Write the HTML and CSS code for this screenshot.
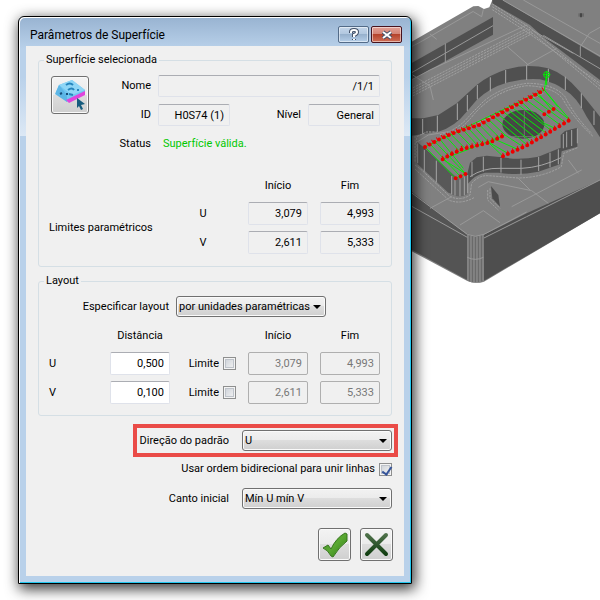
FILE: index.html
```html
<!DOCTYPE html>
<html lang="pt">
<head>
<meta charset="utf-8">
<title>Parâmetros de Superfície</title>
<link rel="stylesheet" href="styles.css">
</head>
<body>
<svg class="scene" viewBox="400 0 200 300" aria-hidden="true">
  <g transform="translate(410 0) scale(.33333)">
    <path fill="#808080" d="M-30 135L5 125L190 19L205 18L222 27L238 22L247 0H570V640L222 845Q198 853 172 843L-30 735Z"/>
    <path fill="#545454" d="M-30 555L5 575L172 705V840L-30 730Z"/>
    <path fill="#4e4e4e" d="M220 705L350 640L570 540V640L222 842Z"/>
    <path fill="#6a6a6a" d="M172 700Q196 716 220 702V842Q198 853 172 842Z"/>
    <path stroke="#999" stroke-width="3" fill="none" d="M174 705V842M183 708V846M192 710V848M201 710V848M210 708V846M219 704V842M172 772Q196 784 220 772"/>
    <path stroke="#9a9a9a" stroke-width="3" fill="none" d="M0 616L172 712M222 714L350 650L570 540M0 575L172 703L196 709L222 703L350 636"/>
    <path fill="#505050" d="M0 192L249 51V104L0 242Z"/>
    <path fill="#505050" d="M247 0H278L570 172V240L400 112L360 75L247 10Z"/>
    <g stroke="#999" stroke-width="3" fill="none">
      <path d="M5 218L249 77M106 130V188M5 140L42 120L190 34M60 102L80 118M190 35L215 50L220 28"/>
      <path d="M278 0L570 168M340 0L570 130M511 170V140L538 100L570 82M400 106L570 206"/>
      <path d="M0 242L60 210L350 75M8 225L60 258L70 300M292 140L355 195M365 90L490 160M440 145L350 195"/>
    </g>
    <g class="mesh" stroke="#a0a0a0" stroke-width="3" fill="none">
      <path d="M247 12L355 80L570 258M247 20L350 86L570 268M247 29L348 94L570 250"/>
      <path d="M0 268L355 83M0 276L360 88M0 284L365 94M0 292L368 100"/>
    </g>
    <path fill="#6a6a6a" d="M505 40h17v10h-17z"/><path stroke="#333" stroke-width="4" d="M513 40v12"/>
    <path fill="#505050" d="M0 355H40L85 345L140 310L200 255Q238 225 290 208Q350 190 415 205Q465 222 510 275L570 350V412L530 350Q500 290 465 270Q435 248 390 238Q350 233 290 248Q240 262 200 300L170 335Q135 380 85 395L0 408Z"/>
    <path stroke="#aaa" stroke-width="3" fill="none" d="M38 357V403M82 347V396M142 310V360M172 285V333M202 255V298M241 232V274M287 210V250M350 196V240M415 206V246M466 230V270M514 280V324M552 332V375"/>
    <g class="mesh" stroke="#a3a3a3" stroke-width="3" fill="none">
      <path d="M90 404Q145 390 180 345L220 305Q270 262 350 250Q430 250 465 290Q495 350 545 400M95 410Q150 397 190 345Q255 270 350 257Q430 260 458 296Q490 355 550 410"/>
      <path d="M20 470V410L50 396H80M15 485V405"/>
    </g>
  </g>
  <g transform="translate(415 60) scale(.33333)">
    <path fill="#585858" d="M5 245L30 265L122 350V405L100 398L5 310Z"/>
    <path fill="#666" d="M108 345Q133 368 158 342V402Q132 417 108 402Z"/>
    <path fill="#505050" d="M156 345L165 308L185 292L215 287L260 292Q315 301 370 290L437 263V225L450 213L487 203V260L440 274L435 313L370 335Q310 348 250 338L210 338Q180 344 158 372Z"/>
    <path stroke="#a5a5a5" stroke-width="3" fill="none" d="M8 250V310M28 270V335M64 302V367M110 348V403M120 355V407M135 358V409M148 350V406M158 345V400M171 305V350M205 290V335M258 294V338M318 299V344M371 291V333M405 278V322M430 268V313M445 222V265M455 215V262M470 210V258M487 205V250M165 350Q205 323 255 325H320Q380 322 438 293"/>
    <g class="mesh" stroke="#a0a0a0" stroke-width="3" fill="none">
      <path d="M0 315L20 330L103 408Q135 425 165 405L170 370Q192 345 220 347L310 354Q385 352 439 320L446 280L490 262M0 327L101 420Q136 435 177 413"/>
      <path d="M225 385V415L255 445M218 390V420L250 450"/>
    </g>
    <path stroke="#999" stroke-width="3" fill="none" d="M45 445L110 410M190 382L220 365L350 392L400 430M290 440L500 330M345 390L310 355M490 340L460 300M135 495L205 452L255 488M0 250L40 225L100 215M140 210L385 100"/>
    <path fill="#4b4b4b" d="M228 378L250 405L255 440L232 415Z"/>
    <ellipse cx="325" cy="193" rx="63" ry="43" fill="#464646"/>
    <path stroke="#888" stroke-width="2" d="M328 152V236M290 230H360"/>
    <path class="toolpath" d="M30 261L122 355M45 252L132 345M60 245L152 341M75 238L145 325M83 298L152 341M30 261L388 90L395 44M388 90L428 140M388 90L465 180M122 355L152 341M83 298L270 225L322 259M90 226L130 270M105 220L150 265M125 214L170 260M145 210L188 257M160 205L205 253M178 201L222 248M192 193L240 242M207 187L255 235M220 178L270 225M236 170L335 254M250 163L350 247M265 155L364 236M280 150L378 228M292 143L393 219M308 134L408 211M322 128L388 190L420 205M337 122L437 196M351 113L452 188M366 105L465 180M218 245L280 281M240 238L308 268M264 289L218 245M372 103L415 155"/>
    <path class="points" d="M30 261L75 237L120 217L190 196L388 90"/>
    <path class="points" d="M83 298L110 282L140 268L225 247L270 225"/>
    <path class="points" d="M264 289L340 254L465 180"/>
    <path class="points" d="M388 163L428 140M122 355L153 341"/>
    <path class="ticks" d="M37 253L75 233L120 213L190 192L388 86M83 294L140 264L225 243L270 221M264 285L340 250L465 176"/>
    <g stroke="#00ec00" stroke-width="3" fill="none"><circle cx="395" cy="44" r="9"/><path d="M384 44H406M395 33V75"/></g>
  </g>
</svg>

<section class="dialog" role="dialog" aria-labelledby="dialog-title">
  <header class="titlebar">
    <h1 id="dialog-title">Parâmetros de Superfície</h1>
    <button class="caption" type="button" aria-label="Ajuda">
      <svg viewBox="0 0 16 14"><path class="glyph-edge" d="M5 5V4Q5 2 8 2Q11 2 11 4Q11 6 8 7V9M8 11V12"/><path class="glyph" d="M5 5V4Q5 2 8 2Q11 2 11 4Q11 6 8 7V9M8 11V12"/></svg>
    </button>
    <button class="caption close" type="button" aria-label="Fechar">
      <svg viewBox="0 0 16 14"><path class="glyph-edge" d="M4 4L12 10M12 4L4 10"/><path class="glyph" d="M4 4L12 10M12 4L4 10"/></svg>
    </button>
  </header>

  <form class="client">
    <fieldset>
      <legend>Superfície selecionada</legend>
      <div class="surface">
        <button class="pick" type="button" aria-label="Selecionar superfície">
          <svg viewBox="0 0 36 36">
            <path fill="#72c7f2" d="M7 8L20 3L33 13V17L15 25L4 15Z"/>
            <path fill="#8fd6f6" d="M7 8L20 3L33 13L20 18Z"/>
            <path fill="#5cb6e6" d="M3 17L7 8L15 18V25Z"/>
            <path fill="#df45dc" d="M14 23L33 14V18L17 26Z"/>
            <path fill="none" stroke="#2585bd" stroke-width="2" d="M14 8Q18 5 21 8M16 13Q20 10 22 13M25 13H27M17 17L21 18"/>
            <path fill="none" stroke="#164f7c" stroke-width="2" d="M8 17L10 16M14 17H16"/>
            <path fill="#155b7d" d="M25 21L33 27L29 28L31 32L29 33L27 29L25 31Z"/>
          </svg>
        </button>
        <label for="nome">Nome</label>
        <input id="nome" class="wide" value="/1/1" readonly>
        <label class="second" for="ident">ID</label>
        <div class="pair">
          <input id="ident" value="H0S74 (1)" readonly>
          <label for="nivel">Nível</label>
          <input id="nivel" value="General" readonly>
        </div>
        <span class="second">Status</span>
        <output class="valid">Superfície válida.</output>
      </div>
      <div class="limits">
        <span class="head start">Início</span>
        <span class="head">Fim</span>
        <span class="caption-cell">Limites paramétricos</span>
        <span class="axis">U</span>
        <input aria-label="U início" value="3,079" readonly>
        <input aria-label="U fim" value="4,993" readonly>
        <span class="axis">V</span>
        <input aria-label="V início" value="2,611" readonly>
        <input aria-label="V fim" value="5,333" readonly>
      </div>
    </fieldset>

    <fieldset class="layout">
      <legend>Layout</legend>
      <div class="choice">
        <label for="tipo">Especificar layout</label>
        <span class="combo"><select id="tipo"><option>por unidades paramétricas</option></select></span>
      </div>
      <div class="spacing">
        <span class="head distance">Distância</span>
        <span class="head start">Início</span>
        <span class="head">Fim</span>
        <label for="du">U</label>
        <input id="du" class="edit" value="0,500">
        <label class="tick">Limite <input type="checkbox"></label>
        <input aria-label="Limite U início" value="3,079" disabled>
        <input aria-label="Limite U fim" value="4,993" disabled>
        <label for="dv">V</label>
        <input id="dv" class="edit" value="0,100">
        <label class="tick">Limite <input type="checkbox"></label>
        <input aria-label="Limite V início" value="2,611" disabled>
        <input aria-label="Limite V fim" value="5,333" disabled>
      </div>
    </fieldset>

    <div class="options">
      <div class="option highlight">
        <label for="direcao">Direção do padrão</label>
        <span class="combo"><select id="direcao"><option>U</option></select></span>
      </div>
      <label class="tick">Usar ordem bidirecional para unir linhas <input type="checkbox" checked></label>
      <div class="option">
        <label for="canto">Canto inicial</label>
        <span class="combo"><select id="canto"><option>Mín U mín V</option></select></span>
      </div>
    </div>

    <footer class="actions">
      <button type="submit" aria-label="OK">
        <svg viewBox="0 0 31 31">
          <defs><linearGradient id="leaf" x1="0" y1="0" x2="1" y2="1"><stop offset="0" stop-color="#3f8d2b"/><stop offset=".5" stop-color="#5aa832"/><stop offset="1" stop-color="#2c7c10"/></linearGradient></defs>
          <path fill="url(#leaf)" stroke="#38771f" d="M4 19L9 16L12 20Q17 9 26 4L28 5V12Q20 18 14 28L12 27Q9 21 4 19Z"/>
        </svg>
      </button>
      <button type="button" aria-label="Cancelar">
        <svg viewBox="0 0 31 31">
          <defs><linearGradient id="cross" x1="0" y1="0" x2="0" y2="1"><stop offset="0" stop-color="#4d7049"/><stop offset="1" stop-color="#123f12"/></linearGradient></defs>
          <path fill="none" stroke="url(#cross)" stroke-width="4" stroke-linecap="round" d="M6 6L25 25M25 6L6 25"/>
        </svg>
      </button>
    </footer>
  </form>
</section>
</body>
</html>
```
FILE: styles.css
```css
* { box-sizing: border-box; }

body {
  position: relative;
  margin: 0;
  padding: 16px 188px 16px 18px;
  background: #fff;
  color: #000;
  font: 11px/16px Roboto, sans-serif;
}

/* 3D model behind the dialog */
.scene { position: absolute; top: 0; right: 0; width: 200px; height: 300px; }
.mesh { stroke-dasharray: 7 3; }
.toolpath { fill: none; stroke: #00f000; stroke-width: 3; }
.points { fill: none; stroke: #ed0000; stroke-width: 12; stroke-linecap: round; stroke-dasharray: 0 16; }
.ticks { fill: none; stroke: #ed0000; stroke-width: 12; stroke-dasharray: 3 13; }

.dialog {
  position: relative;
  border: 1px solid #000;
  border-radius: 6px 6px 0 0;
  padding: 0 7px 7px;
  background: linear-gradient(#98b3d1 0, #b9d1ea 32px, #b9d1ea 60px, #dce8f5 119px, #b9d1ea 119px);
  box-shadow: inset 1px 1px #fff, inset -1px -1px #22c8f0, 2px 4px 14px 1px rgba(0, 0, 0, .8);
}

.titlebar { display: flex; align-items: center; gap: 2px; height: 29px; padding: 0 2px 0 4px; }
h1 { flex: 1; margin: 0; padding-top: 6px; font: 12px/16px Roboto, sans-serif; }
.caption {
  width: 31px; height: 17px; margin-top: 6px; padding: 0;
  border: 1px solid #536b88; border-radius: 2px;
  background: linear-gradient(#c4d5e9 0, #b2c8e0 45%, #97b1cd 50%, #b5cee8 100%);
  box-shadow: inset 0 0 0 1px rgba(255, 255, 255, .5);
}
.close { border-color: #47131e; background: linear-gradient(#e2a096 0, #d48476 45%, #b5432c 50%, #cf6f58 100%); }
.caption svg { display: block; width: 16px; height: 14px; margin: 0 auto; }
.glyph, .glyph-edge { fill: none; stroke: #fff; stroke-width: 2; }
.glyph-edge { stroke: #414f66; stroke-width: 4; }

.client { padding: 6px 12px 15px; background: #f0f0f0; }

fieldset {
  min-width: 0; margin: 0 0 6px; padding: 7px 11px 12px 10px;
  border: 1px solid #d5dfe5; border-radius: 3px;
}
.layout { padding-bottom: 11px; }
legend { margin-left: -5px; padding: 0 2px; }

input, select, button { font: inherit; color: inherit; }
input:not([type]) {
  width: 100%; min-width: 0; height: 23px; padding: 0 5px;
  border: 1px solid #dfe2ea; border-top-color: #abadb3; border-radius: 2px;
  background: #f0f0f0; text-align: right;
}
input.edit { background: #fff; }
input:disabled { border-color: #afafaf; color: #777; }

.surface { display: grid; grid-template-columns: 38px 57px 1fr; gap: 7px; grid-auto-rows: 22px; align-items: center; }
.surface > label, .surface > span { text-align: right; }
.surface input:not([type]) { height: 22px; }
.second { grid-column: 2; }
.pick { grid-row: 1 / 3; align-self: start; width: 38px; height: 38px; margin: 1px 0 0 2px; }
.pick, .actions button {
  padding: 0; border: 1px solid #707070; border-radius: 3px;
  background: linear-gradient(#f3f3f3, #ebebeb 49%, #dddddd 50%, #cfcfcf);
  box-shadow: inset 0 0 0 1px #fafafa;
}
.pick svg, .actions svg { display: block; width: 100%; height: 100%; }
.pair { display: flex; justify-content: space-between; align-items: center; }
.pair label { margin: 0 7px 0 auto; }
.pair input:not([type]) { width: 72px; }
.valid { padding-left: 5px; color: #00c800; }

.limits, .spacing { display: grid; gap: 6px 12px; align-items: center; }
.limits { grid-template-columns: 1fr 66px 60px 60px; margin-top: 23px; }
.head { margin-bottom: 2px; text-align: center; }
.limits .start { grid-column: 3; }
.caption-cell { grid-row: 2 / 4; white-space: nowrap; }
.axis { grid-column: 2; text-align: center; }

.choice { display: flex; align-items: center; justify-content: flex-end; gap: 7px; margin: 0 54px 11px 0; }
.combo { position: relative; width: 150px; }
.combo::after {
  content: ""; position: absolute; right: 5px; top: 9px;
  border: 4px solid transparent; border-top-color: #000; border-bottom: 0; pointer-events: none;
}
select {
  appearance: none; display: block; width: 100%; height: 21px; padding: 0 2px;
  border: 1px solid #707070; border-radius: 3px;
  background: linear-gradient(#f2f2f2, #ebebeb 49%, #dddddd 50%, #cfcfcf);
  box-shadow: inset 0 0 0 1px #fafafa;
}
.spacing { grid-template-columns: 1fr 60px 54px 60px 60px; }
.distance { grid-column: 2; }
.spacing .start { grid-column: 4; }

.tick { display: flex; align-items: center; justify-content: flex-end; gap: 4px; }
input[type="checkbox"] {
  appearance: none; position: relative; width: 13px; height: 13px; margin: 0;
  border: 1px solid #8e8f8f; background: linear-gradient(135deg, #c9ced5, #f6f6f6);
  box-shadow: inset 0 0 0 1px #f4f4f4, inset 0 0 0 2px #bec3ca;
}
input[type="checkbox"]:checked::after {
  content: ""; position: absolute; left: 4px; top: 1px; width: 4px; height: 8px;
  border: solid #35549a; border-width: 0 2px 2px 0; transform: rotate(35deg);
}

.options { display: flex; flex-direction: column; align-items: flex-end; margin-top: 8px; }
.option { display: flex; align-items: center; gap: 13px; }
.highlight { margin: 0 -6px 4px 0; padding: 2px 2px 2px 3px; border: 4px solid #ea4b47; }
.options .tick { margin-bottom: 11px; }

.actions { display: flex; justify-content: flex-end; gap: 9px; margin: 19px -1px 0 0; }
.actions button { width: 33px; height: 33px; }
```
